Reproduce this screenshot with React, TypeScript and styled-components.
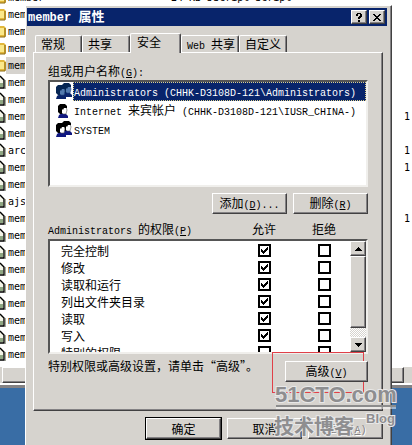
import React, { ReactNode } from "react";
import styled, { createGlobalStyle, css } from "styled-components";

const face = "#d6d3ce";
const navy = "#08246b";

const GlobalStyle = createGlobalStyle`
  * { box-sizing: border-box; }
  html, body, #root { height: 100%; }
  body {
    margin: 0;
    overflow: hidden;
    background: #396da5;
    color: #000;
    font: 12px/16px "Noto Sans CJK SC", sans-serif;
    white-space: nowrap;
  }
  button, input { font: inherit; color: inherit; margin: 0; padding: 0; }
`;

const raised = css`
  border: 1px solid;
  border-color: #fff #424142 #424142 #fff;
  box-shadow: inset -1px -1px #848284;
`;
const sunken = css`
  border: 2px solid;
  border-color: #555 #f0efec #f0efec #555;
`;

const Desktop = styled.div`
  position: relative;
  height: 100%;
  overflow: hidden;
`;

/* Explorer window behind the dialog */
const Explorer = styled.div`
  background: #fff;
  border-bottom: 3px solid #848284;
`;
const FileList = styled.ul`
  list-style: none;
  margin: 0;
  padding: 0;
  height: 367px;
  overflow: hidden;
`;
const FileRow = styled.li`
  display: flex;
  align-items: center;
  height: 17px;
  &:first-child { margin-top: -11px; }
`;
const FileName = styled.span<{ $selected?: boolean }>`
  flex: 0 0 150px;
  padding-left: 2px;
  background: ${(p) => (p.$selected ? face : "transparent")};
  font: 10px/17px "DejaVu Sans Mono", monospace;
`;
const FileSize = styled.span`
  flex: 1;
  padding-left: 15px;
  font: 10px/17px "DejaVu Sans Mono", monospace;
`;
const FileCount = styled.span`
  padding-right: 2px;
  font: 10px/17px "DejaVu Sans Mono", monospace;
`;
const ExplorerScroll = styled.div`
  display: flex;
  height: 18px;
  background: ${face};
  border-bottom: 2px solid #fff;
  padding: 0 8px 0 2px;
`;
const ExplorerThumb = styled.div`
  flex: 1;
  ${raised}
`;

/* Property sheet */
const Dialog = styled.section`
  position: absolute;
  top: 5px;
  left: 25px;
  right: 20px;
  bottom: -8px;
  display: flex;
  flex-direction: column;
  padding: 2px 4px 0 1px;
  background: ${face};
  ${raised}
`;
const TitleBar = styled.header`
  display: flex;
  align-items: center;
  gap: 2px;
  height: 18px;
  padding: 0 2px 0 1px;
  flex: none;
  background: ${navy};
  color: #fff;
  font-weight: bold;
`;
const Title = styled.h1`
  flex: 1;
  margin: 0;
  font-size: 13px;
  line-height: 18px;
`;
const Caption = styled.button`
  display: grid;
  place-items: center;
  width: 16px;
  height: 14px;
  background: ${face};
  ${raised}
`;
const Tabs = styled.nav`
  display: flex;
  align-items: flex-end;
  height: 26px;
  margin: 0 0 0 8px;
  flex: none;
`;
const Tab = styled.button<{ $width: number; $active?: boolean }>`
  width: ${(p) => p.$width}px;
  height: ${(p) => (p.$active ? 20 : 17)}px;
  margin-bottom: ${(p) => (p.$active ? -1 : 0)}px;
  padding: ${(p) => (p.$active ? "0 0 3px 6px" : "0 0 0 5px")};
  background: ${face};
  border: 1px solid #fff;
  border-right-color: #424142;
  border-bottom: 0;
  border-radius: 2px 2px 0 0;
  box-shadow: inset -1px 0 #848284;
  line-height: 16px;
  text-align: left;
  z-index: ${(p) => (p.$active ? 1 : 0)};
`;
const Page = styled.div`
  display: flex;
  flex-direction: column;
  height: 359px;
  flex: none;
  margin: 0 4px 0 6px;
  padding: 10px 14px 0 14px;
  ${raised}
`;
const Line = styled.div`
  height: 16px;
  flex: none;
`;
const Latin = styled.span`
  font-family: "Liberation Mono", monospace;
  font-size: 10px;
  white-space: pre;
`;
const TitleLatin = styled(Latin)`
  font-size: 12px;
`;
const UserList = styled.ul`
  list-style: none;
  margin: 0;
  margin-top: 1px;
  padding: 0 0 0 5px;
  height: 107px;
  flex: none;
  background: #fff;
  ${sunken}
`;
const UserRow = styled.li`
  display: flex;
  align-items: center;
  height: 19px;
`;
const UserName = styled.span<{ $selected?: boolean }>`
  flex: 1;
  height: 19px;
  padding-left: 1px;
  line-height: 17px;
  ${(p) =>
    p.$selected &&
    css`
      background: ${navy};
      color: #fff;
      outline: 1px dotted #dcd08c;
      outline-offset: -1px;
    `}
`;
const Actions = styled.div`
  display: flex;
  justify-content: flex-end;
  gap: 6px;
  margin-top: 6px;
  flex: none;
`;
const Button = styled.button<{ $primary?: boolean }>`
  flex: 0 0 75px;
  height: 21px;
  background: ${face};
  line-height: 17px;
  ${raised}
  ${(p) => p.$primary && css`outline: 1px solid #000;`}
  &:disabled { color: #848284; text-shadow: 1px 1px #fff; }
`;
const ListHead = styled.div`
  display: grid;
  grid-template-columns: 1fr 60px 60px 14px;
  height: 16px;
  margin-top: 7px;
  flex: none;
`;
const HeadCell = styled.span`
  text-align: center;
  &:first-child { text-align: left; }
`;
const PermissionBox = styled.div`
  display: flex;
  height: 115px;
  margin-top: 2px;
  flex: none;
  overflow: hidden;
  background: #fff;
  ${sunken}
`;
const PermissionTable = styled.table`
  flex: 1;
  align-self: flex-start;
  margin-top: 1px;
  border-spacing: 0;
  table-layout: fixed;
`;
const PermissionName = styled.th`
  height: 17px;
  padding: 0 0 0 11px;
  font-weight: normal;
  text-align: left;
`;
const PermissionCell = styled.td<{ $width: number }>`
  width: ${(p) => p.$width}px;
  height: 17px;
  padding: 0;
`;
const Check = styled.input`
  appearance: none;
  display: block;
  width: 13px;
  height: 13px;
  margin: 0 auto;
  border: 2px solid #000;
  background: #fff;
  &:checked {
    background: url("data:image/svg+xml,%3Csvg xmlns='http://www.w3.org/2000/svg' viewBox='0 0 9 9' shape-rendering='crispEdges'%3E%3Cpath d='M1 3h1v1h1v1h1v-1h1v-1h1v-1h1v-1h1v3h-1v1h-1v1h-1v1h-1v1h-1v-1h-1v-1h-1z'/%3E%3C/svg%3E");
  }
`;
const ScrollBar = styled.div`
  display: flex;
  flex-direction: column;
  width: 16px;
  background: repeating-conic-gradient(#fff 0 25%, ${face} 0 50%) 0 0 / 2px 2px;
`;
const ScrollButton = styled.button`
  display: grid;
  place-items: center;
  height: 15px;
  background: ${face};
  ${raised}
`;
const ScrollThumb = styled.div`
  height: 72px;
  margin-bottom: auto;
  background: ${face};
  ${raised}
`;
const Advanced = styled.div`
  display: flex;
  justify-content: space-between;
  height: 41px;
  margin: -2px 4px 0 0;
`;
const Hint = styled.p`
  margin: 6px 0 0;
`;
const Marked = styled.div`
  display: flex;
  flex: 0 0 92px;
  min-width: 0;
  width: 92px;
  height: 41px;
  padding: 8px 0 0 12px;
  border: 1px solid #e04048;
`;
const AdvancedButton = styled(Button)`
  flex: 0 0 83px;
`;
const Footer = styled.footer`
  display: flex;
  justify-content: flex-end;
  gap: 6px;
  margin-top: 7px;
  padding-right: 4px;
`;

const Watermark = styled.svg`
  position: absolute;
  top: 374px;
  right: 8px;
  width: 140px;
  height: 71px;
  pointer-events: none;
`;

const FolderIcon = () => (
  <svg width="6" height="17" viewBox="0 0 6 17">
    <path d="M0 3h4l2 2v8l-1 1H0z" fill="#e2b83c" />
    <path d="M0 5h4v7H0z" fill="#fbe88a" />
    <path d="M0 14h5V5" fill="none" stroke="#8c6a14" />
  </svg>
);
const FileIcon = () => (
  <svg width="6" height="17" viewBox="0 0 6 17">
    <path d="M0 1l4 4v9H0z" fill="#f4f5e8" />
    <path d="M0 9h3v4H0" fill="#8fa783" />
    <path d="M0 2l4 4v8H0" fill="none" stroke="#000" strokeWidth="1.4" />
    <path d="M5.5 6v9" stroke="#a4aa98" />
  </svg>
);

const Head = ({ x, selected }: { x: number; selected?: boolean }) => (
  <g transform={`translate(${x} 0)`}>
    <path d="M1 16l1-3 3-2h3l3 3v2z" fill={selected ? "#08246b" : "#101880"} />
    <path d="M5 5h4l1 3-1 4H6l-2-2z" fill={selected ? "#527aae" : "#fff"} stroke={selected ? "#294981" : "#555"} strokeWidth=".6" />
    <path d="M1 4l2-2h5l2 2v2H7L6 8 5 7v5H3L1 10z" fill={selected ? "#052553" : "#000"} />
  </g>
);
const UserIcon = ({ group, selected }: { group?: boolean; selected?: boolean }) => (
  <svg width="18" height="17" viewBox="0 0 18 17">
    {group && <g transform="translate(0 -2)"><Head x={6} selected={selected} /></g>}
    <Head x={group ? 0 : 2} selected={selected} />
  </svg>
);
const Arrow = ({ down }: { down?: boolean }) => (
  <svg width="7" height="4" viewBox="0 0 7 4" shapeRendering="crispEdges">
    <path d={down ? "M0 0h7v1H6v1H5v1H4v1H3V3H2V2H1V1H0z" : "M3 0h1v1h1v1h1v1h1v1H0V3h1V2h1V1h1z"} />
  </svg>
);

const Key = ({ letter, tail = "" }: { letter: string; tail?: string }): ReactNode => (
  <Latin>(<u>{letter}</u>){tail}</Latin>
);

const files = [
  "member", "member", "member", "member", "member", "member", "member", "member",
  "member", "archive", "member", "member", "ajs", "member", "member", "member",
  "member", "member", "member", "member", "member", "member",
];
const counted = [7, 9, 10, 13];
const permissions = ["完全控制", "修改", "读取和运行", "列出文件夹目录", "读取", "写入", "特别的权限"];

export default function App() {
  return (
    <Desktop>
      <GlobalStyle />
      <Explorer>
        <FileList>
          {files.map((name, i) => (
            <FileRow key={i}>
              {i < 5 ? <FolderIcon /> : <FileIcon />}
              <FileName $selected={i === 4}>{name}</FileName>
              <FileSize>{i === 0 ? "24 KB JScript Script" : ""}</FileSize>
              <FileCount>{counted.includes(i) ? "1" : ""}</FileCount>
            </FileRow>
          ))}
        </FileList>
        <ExplorerScroll><ExplorerThumb /></ExplorerScroll>
      </Explorer>

      <Dialog aria-label="member 属性">
        <TitleBar>
          <Title><TitleLatin>member </TitleLatin>属性</Title>
          <Caption aria-label="Help">
            <svg width="8" height="9" viewBox="0 0 8 9" shapeRendering="crispEdges">
              <path d="M1 1h1V0h4v1h1v3H6v1H5v1H3V4h1V3h1V1H3v2H1zM3 7h2v2H3z" />
            </svg>
          </Caption>
          <Caption aria-label="Close">
            <svg width="8" height="7" viewBox="0 0 8 7" shapeRendering="crispEdges">
              <path d="M0 0h2v1h1v1h2V1h1V0h2v1H7v1H6v1H5v1h1v1h1v1h1v1H6V6H5V5H3v1H2v1H0V6h1V5h1V4h1V3H2V2H1V1H0z" />
            </svg>
          </Caption>
        </TitleBar>
        <Tabs>
          <Tab $width={47}>常规</Tab>
          <Tab $width={48}>共享</Tab>
          <Tab $width={51} $active>安全</Tab>
          <Tab $width={58}><Latin>Web </Latin>共享</Tab>
          <Tab $width={48}>自定义</Tab>
        </Tabs>
        <Page>
          <Line>组或用户名称<Key letter="G" tail=":" /></Line>
          <UserList>
            <UserRow>
              <UserIcon group selected />
              <UserName $selected><Latin>Administrators (CHHK-D3108D-121\Administrators)</Latin></UserName>
            </UserRow>
            <UserRow>
              <UserIcon />
              <UserName><Latin>Internet </Latin>来宾帐户<Latin> (CHHK-D3108D-121\IUSR_CHINA-)</Latin></UserName>
            </UserRow>
            <UserRow>
              <UserIcon group />
              <UserName><Latin>SYSTEM</Latin></UserName>
            </UserRow>
          </UserList>
          <Actions>
            <Button>添加<Key letter="D" tail="..." /></Button>
            <Button>删除<Key letter="R" /></Button>
          </Actions>
          <ListHead>
            <HeadCell><Latin>Administrators </Latin>的权限<Key letter="P" /></HeadCell>
            <HeadCell>允许</HeadCell>
            <HeadCell>拒绝</HeadCell>
          </ListHead>
          <PermissionBox>
            <PermissionTable>
              <tbody>
                {permissions.map((name, i) => (
                  <tr key={name}>
                    <PermissionName scope="row">{name}</PermissionName>
                    <PermissionCell $width={68}><Check type="checkbox" aria-label={`${name} 允许`} defaultChecked={i < 6} /></PermissionCell>
                    <PermissionCell $width={52}><Check type="checkbox" aria-label={`${name} 拒绝`} /></PermissionCell>
                  </tr>
                ))}
              </tbody>
            </PermissionTable>
            <ScrollBar>
              <ScrollButton aria-label="Up"><Arrow /></ScrollButton>
              <ScrollThumb />
              <ScrollButton aria-label="Down"><Arrow down /></ScrollButton>
            </ScrollBar>
          </PermissionBox>
          <Advanced>
            <Hint>特别权限或高级设置，请单击“高级”。</Hint>
            <Marked><AdvancedButton>高级<Key letter="V" /></AdvancedButton></Marked>
          </Advanced>
        </Page>
        <Footer>
          <Button $primary>确定</Button>
          <Button>取消</Button>
          <Button disabled>应用<Key letter="A" /></Button>
        </Footer>
      </Dialog>

      <Watermark viewBox="0 0 140 71" aria-hidden="true">
        <g fontFamily="Liberation Sans, sans-serif" fontWeight="bold" fill="#8e8e90" stroke="#e8e8e8" strokeWidth="2" paintOrder="stroke">
          <text x="11" y="28" fontSize="22">51CTO.com</text>
          <text x="102" y="49" fontSize="13">Blog</text>
          <text x="10" y="60" fontSize="20" fontFamily="Noto Sans CJK SC, sans-serif">技术博客</text>
        </g>
        <path d="M12 32h120" stroke="#8c8c8c" strokeWidth="2" />
        <path d="M12 34h120" stroke="#fff" />
      </Watermark>
    </Desktop>
  );
}
